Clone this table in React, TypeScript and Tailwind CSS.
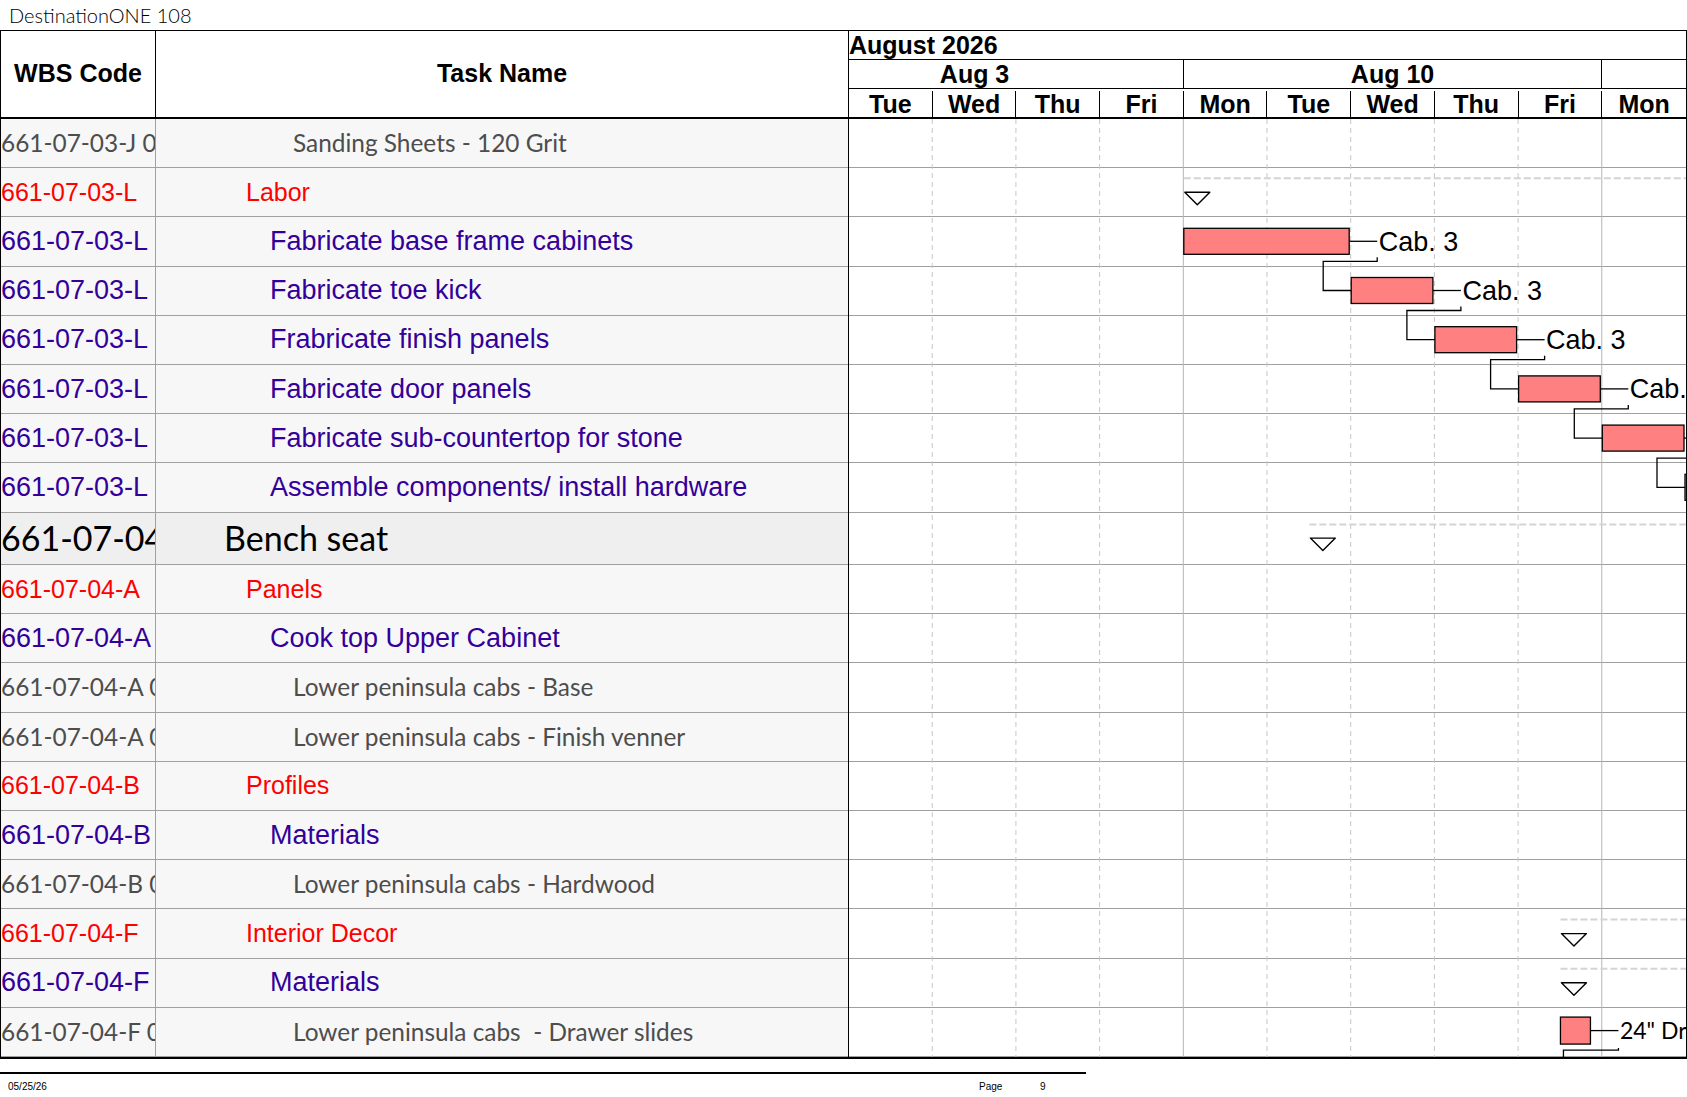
import React from "react";

const D = 83.7; // one day column in the chart
const ROW = 49.2;
const BENCH = 52.6;
const CHART_W = 837;

type Kind = "item" | "group" | "sub" | "top";

const rows: { wbs: string; name: string; kind: Kind }[] = [
  { wbs: "661-07-03-J 01", name: "Sanding Sheets - 120 Grit", kind: "item" },
  { wbs: "661-07-03-L", name: "Labor", kind: "group" },
  { wbs: "661-07-03-L", name: "Fabricate base frame cabinets", kind: "sub" },
  { wbs: "661-07-03-L", name: "Fabricate toe kick", kind: "sub" },
  { wbs: "661-07-03-L", name: "Frabricate finish panels", kind: "sub" },
  { wbs: "661-07-03-L", name: "Fabricate door panels", kind: "sub" },
  { wbs: "661-07-03-L", name: "Fabricate sub-countertop for stone", kind: "sub" },
  { wbs: "661-07-03-L", name: "Assemble components/ install hardware", kind: "sub" },
  { wbs: "661-07-04", name: "Bench seat", kind: "top" },
  { wbs: "661-07-04-A", name: "Panels", kind: "group" },
  { wbs: "661-07-04-A", name: "Cook top Upper Cabinet", kind: "sub" },
  { wbs: "661-07-04-A 01", name: "Lower peninsula cabs - Base", kind: "item" },
  { wbs: "661-07-04-A 02", name: "Lower peninsula cabs - Finish venner", kind: "item" },
  { wbs: "661-07-04-B", name: "Profiles", kind: "group" },
  { wbs: "661-07-04-B", name: "Materials", kind: "sub" },
  { wbs: "661-07-04-B 01", name: "Lower peninsula cabs - Hardwood", kind: "item" },
  { wbs: "661-07-04-F", name: "Interior Decor", kind: "group" },
  { wbs: "661-07-04-F", name: "Materials", kind: "sub" },
  { wbs: "661-07-04-F 01", name: "Lower peninsula cabs  - Drawer slides", kind: "item" },
];

const textStyle: Record<Kind, string> = {
  item: "font-['Lato',sans-serif] text-[24.4px] text-[#4d4d4d]",
  group: "font-['Liberation_Sans',Arial,sans-serif] text-[25px] text-[#ff0000]",
  sub: "font-['Liberation_Sans',Arial,sans-serif] text-[27px] text-[#330099]",
  top: "font-['Lato',sans-serif] text-[34px] text-black",
};

const wbsSize: Record<Kind, string> = {
  item: "",
  group: "",
  sub: "",
  top: "text-[32.5px]",
};

const indent: Record<Kind, string> = {
  item: "pl-[137px]",
  group: "pl-[90px]",
  sub: "pl-[114px]",
  top: "pl-[68px]",
};

const days = ["Tue", "Wed", "Thu", "Fri", "Mon", "Tue", "Wed", "Thu", "Fri", "Mon"];

const rowTop = (i: number) => (i <= 8 ? i * ROW : 8 * ROW + BENCH + (i - 9) * ROW);
const rowH = (i: number) => (i === 8 ? BENCH : ROW);
const rowMid = (i: number) => rowTop(i) + rowH(i) / 2;

const summaries = [
  { row: 1, x: 4 * D, line: 10, tri: 24 },
  { row: 8, x: 5.5 * D, line: 12, tri: 25.5 },
  { row: 16, x: 8.5 * D, line: 10, tri: 24 },
  { row: 17, x: 8.5 * D, line: 10, tri: 24 },
];

const bars = [
  { row: 2, start: 4 * D, end: 6 * D - 2, label: "Cab. 3" },
  { row: 3, start: 6 * D, end: 7 * D - 2, label: "Cab. 3" },
  { row: 4, start: 7 * D, end: 8 * D - 2, label: "Cab. 3" },
  { row: 5, start: 8 * D, end: 9 * D - 2, label: "Cab. 3" },
  { row: 6, start: 9 * D, end: 10 * D - 2, label: "Cab. 3" },
  { row: 7, start: 10 * D - 1, end: 11 * D, label: "Cab. 3" },
];

function Chart({ height }: { height: number }) {
  const drawer = { row: 18, start: 8.5 * D, end: 8.5 * D + 30 };
  const dc = rowMid(drawer.row) - 2;
  return (
    <svg
      className="absolute inset-0 pointer-events-none"
      width={CHART_W}
      height={height}
      viewBox={`0 0 ${CHART_W} ${height}`}
    >
      {Array.from({ length: 9 }).map((_, i) => {
        const k = i + 1;
        const x = k * D - 0.5;
        const solid = k === 4 || k === 9;
        return (
          <line
            key={k}
            x1={x}
            x2={x}
            y1={0}
            y2={height}
            stroke={solid ? "#b4b4b4" : "#c6c6c6"}
            strokeWidth={1}
            strokeDasharray={solid ? undefined : "5 4"}
          />
        );
      })}

      {summaries.map((s) => {
        const t = rowTop(s.row);
        return (
          <g key={s.row}>
            <line
              x1={s.x}
              x2={CHART_W}
              y1={t + s.line}
              y2={t + s.line}
              stroke="#d4d4d4"
              strokeWidth={2}
              strokeDasharray="7 3"
            />
            <polygon
              points={`${s.x + 1},${t + s.tri} ${s.x + 26},${t + s.tri} ${s.x + 13.5},${t + s.tri + 12.5}`}
              fill="#fff"
              stroke="#000"
              strokeWidth={1.4}
              strokeLinejoin="round"
            />
          </g>
        );
      })}

      {bars.map((b, i) => {
        const c = rowMid(b.row) - 0.7;
        const next = bars[i + 1];
        const nc = next ? rowMid(next.row) - 0.7 : 0;
        return (
          <g key={b.row}>
            <path d={`M${b.end} ${c} H${b.end + 28}`} stroke="#000" strokeWidth={1.3} fill="none" />
            {next && (
              <path
                d={`M${b.end + 28} ${c + 16} V${c + 20} H${next.start - 28} V${nc} H${next.start}`}
                stroke="#000"
                strokeWidth={1.3}
                fill="none"
              />
            )}
            <rect
              x={b.start}
              y={c - 13}
              width={b.end - b.start}
              height={26}
              fill="#ff8080"
              stroke="#000"
              strokeWidth={1.3}
            />
            <text
              x={b.end + 29.5}
              y={c + 9.6}
              fontSize={27}
              fontFamily="'Liberation Sans', Arial, sans-serif"
              fill="#000"
            >
              {b.label}
            </text>
          </g>
        );
      })}

      <path d={`M${drawer.end} ${dc} H${drawer.end + 28}`} stroke="#000" strokeWidth={1.3} fill="none" />
      <path
        d={`M${drawer.end + 28} ${dc + 17.5} V${dc + 19.5} H${drawer.start + 3} V${height + 10}`}
        stroke="#000"
        strokeWidth={1.3}
        fill="none"
      />
      <rect
        x={drawer.start}
        y={dc - 13.5}
        width={drawer.end - drawer.start}
        height={27}
        fill="#ff8080"
        stroke="#000"
        strokeWidth={1.3}
      />
      <text
        x={drawer.end + 29.5}
        y={dc + 8.5}
        fontSize={23}
        fontFamily="Lato, sans-serif"
        fill="#000"
      >
        24" Drawer slides
      </text>
    </svg>
  );
}

export default function App() {
  const bodyH = rowTop(rows.length - 1) + ROW;

  return (
    <div className="w-[1687px] h-[1097px] bg-white overflow-hidden font-['Liberation_Sans',Arial,sans-serif] text-black">
      <div className="h-[30px] flex items-center pl-[9px] font-['Lato',sans-serif] text-[20px] font-light leading-none">
        DestinationONE 108
      </div>

      <div className="border-t border-l border-r border-black">
        {/* header */}
        <div className="flex h-[88px] border-b-2 border-black">
          <div className="w-[155px] border-r border-black flex items-center justify-center text-[25px] font-bold">
            WBS Code
          </div>
          <div className="w-[693px] border-r border-black flex items-center justify-center text-[25px] font-bold">
            Task Name
          </div>
          <div className="flex-1 flex flex-col text-[25px] font-bold leading-none">
            <div className="h-[29px] border-b border-black flex items-center">August 2026</div>
            <div className="h-[29px] border-b border-black flex">
              <div className="w-[334.8px] border-r border-black overflow-hidden flex items-center">
                <div className="ml-[-83.7px] w-[418.5px] shrink-0 text-center">Aug 3</div>
              </div>
              <div className="w-[418.5px] border-r border-black flex items-center justify-center">
                Aug 10
              </div>
              <div className="flex-1" />
            </div>
            <div className="flex-1 grid grid-cols-10 pt-[2px]">
              {days.map((d, i) => (
                <div
                  key={i}
                  className={
                    i < 9
                      ? "border-r border-black flex items-center justify-center"
                      : "flex items-center justify-center"
                  }
                >
                  {d}
                </div>
              ))}
            </div>
          </div>
        </div>

        {/* body */}
        <div className="flex border-b-2 border-black">
          <div className="w-[848px] border-r border-black flex flex-col">
            {rows.map((r, i) => (
              <div
                key={i}
                className={
                  r.kind === "top"
                    ? "flex h-[52.6px] border-b border-[#a0a0a0] bg-[#efefef]"
                    : "flex h-[49.2px] border-b border-[#a0a0a0] bg-[#f7f7f7]"
                }
              >
                <div
                  className={`w-[155px] shrink-0 border-r border-[#a0a0a0] flex items-center overflow-hidden whitespace-nowrap leading-none ${textStyle[r.kind]} ${wbsSize[r.kind]}`}
                >
                  {r.wbs}
                </div>
                <div
                  className={`flex-1 flex items-center whitespace-pre leading-none ${indent[r.kind]} ${textStyle[r.kind]}`}
                >
                  {r.name}
                </div>
              </div>
            ))}
          </div>
          <div className="flex-1 relative flex flex-col overflow-hidden bg-white">
            {rows.map((r, i) => (
              <div
                key={i}
                className={
                  r.kind === "top"
                    ? "h-[52.6px] border-b border-[#a0a0a0]"
                    : "h-[49.2px] border-b border-[#a0a0a0]"
                }
              />
            ))}
            <Chart height={bodyH} />
          </div>
        </div>
      </div>

      {/* footer */}
      <div className="mt-[13px] w-[1086px] border-t-2 border-black" />
      <div className="flex items-center h-[26px] pl-[8px] text-[10px] leading-none">
        <span className="w-[971px]">05/25/26</span>
        <span className="w-[61px]">Page</span>
        <span>9</span>
      </div>
    </div>
  );
}
